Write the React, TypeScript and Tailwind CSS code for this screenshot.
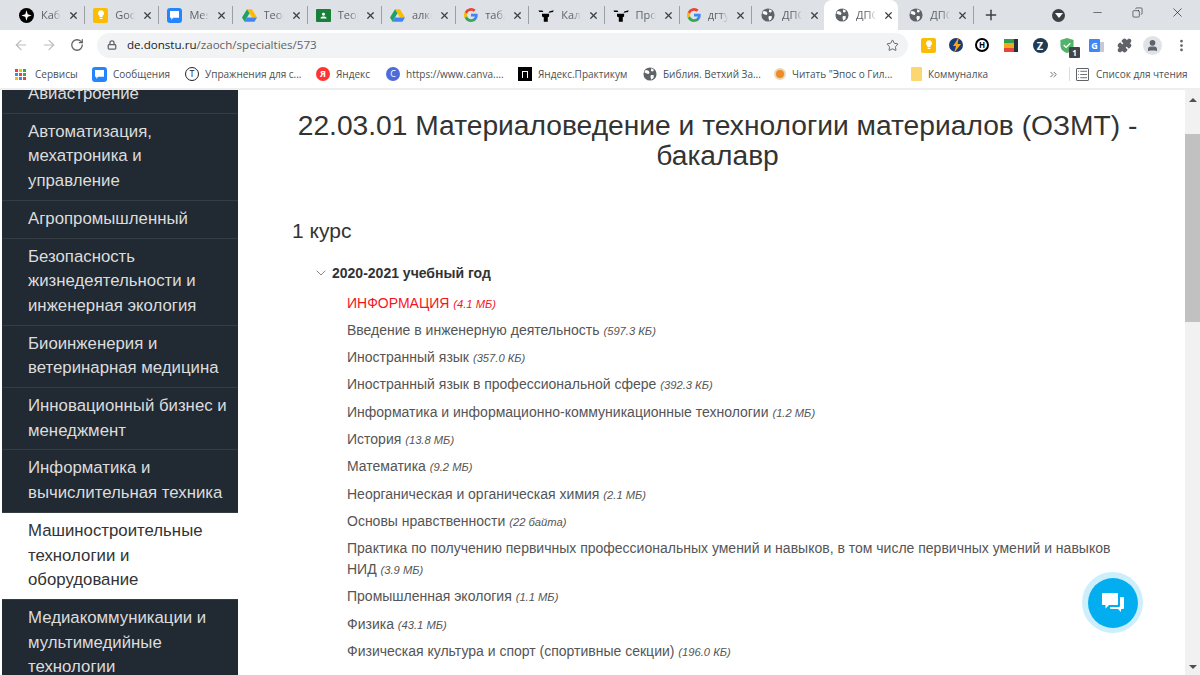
import React from "react";
import { ArrowLeft, ArrowRight, RotateCw, Lock, Star, X, Plus, Minus, Copy, MoreVertical, Puzzle, ChevronDown, ChevronsRight, List, User } from "lucide-react";

const Globe = () => (
  <svg viewBox="0 0 16 16" className="w-[14px] h-[14px] shrink-0">
    <circle cx="8" cy="8" r="7.5" fill="#5f6368" />
    <path d="M3 3.500l3 .5 1.500 2-1 2-2.500-.5L1.500 6zM9 9l3.500.5-.5 3-2.500 2-1-3zM9.500 1.500l3 1.500-1 2-2.500-.5z" fill="#fff" />
  </svg>
);

const GoogleG = () => (
  <svg viewBox="0 0 18 18" className="w-[14px] h-[14px] shrink-0">
    <path d="M17.600 9.200c0-.6-.1-1.200-.2-1.800H9v3.400h4.800a4.100 4.100 0 0 1-1.800 2.700v2.200h2.900c1.700-1.600 2.700-3.900 2.700-6.500z" fill="#4285f4" />
    <path d="M9 18c2.400 0 4.500-.8 5.900-2.200L12 13.500c-.8.500-1.800.9-3 .9-2.300 0-4.300-1.600-5-3.700H1v2.300A9 9 0 0 0 9 18z" fill="#34a853" />
    <path d="M4 10.700a5.400 5.400 0 0 1 0-3.400V5H1a9 9 0 0 0 0 8z" fill="#fbbc05" />
    <path d="M9 3.600c1.300 0 2.500.5 3.400 1.300L15 2.400A9 9 0 0 0 1 5l3 2.300c.7-2.100 2.700-3.700 5-3.700z" fill="#ea4335" />
  </svg>
);

const Drive = () => (
  <svg viewBox="0 0 18 16" className="w-[15px] h-[14px] shrink-0">
    <path d="M6 1h6l6 10h-6z" fill="#fbbc05" />
    <path d="M6 1L0 11l3 5 6-10z" fill="#1ea362" />
    <path d="M3 16h12l3-5H6z" fill="#4285f4" />
  </svg>
);

const Keep = () => (
  <div className="w-[15px] h-[15px] shrink-0 rounded-[2px] bg-[#fbbc04] flex items-center justify-center">
    <svg viewBox="0 0 10 12" className="w-[8px] h-[10px]">
      <path d="M5 0a3.800 3.800 0 0 0-2 7v1.500h4V7a3.800 3.800 0 0 0-2-7zM3.300 9.500h3.400V11H3.300z" fill="#fff" />
    </svg>
  </div>
);

const Messages = () => (
  <div className="w-[15px] h-[15px] shrink-0 rounded-[3px] bg-[#2684fc] flex items-center justify-center">
    <svg viewBox="0 0 10 10" className="w-[9px] h-[9px]">
      <path d="M0 0h10v7.500H3.500L1.500 10V7.500H0z" fill="#fff" />
    </svg>
  </div>
);

const Cabinet = () => (
  <svg viewBox="0 0 16 16" className="w-[15px] h-[15px] shrink-0">
    <circle cx="8" cy="8" r="8" fill="#000" />
    <path d="M8 2.500l1.300 4.200L13.500 8l-4.200 1.300L8 13.500 6.700 9.300 2.500 8l4.200-1.300z" fill="#fff" />
  </svg>
);

const Classroom = () => (
  <div className="w-[15px] h-[13px] shrink-0 rounded-[1px] bg-[#188038] flex items-center justify-center">
    <svg viewBox="0 0 10 8" className="w-[9px] h-[7px]">
      <circle cx="5" cy="2.500" r="1.700" fill="#fff" />
      <path d="M1.500 7.500c0-1.600 1.600-2.300 3.500-2.300s3.500.7 3.500 2.300z" fill="#fff" />
    </svg>
  </div>
);

const Practicum = () => (
  <svg viewBox="0 0 18 14" className="w-[16px] h-[13px] shrink-0">
    <path d="M4.500 5h8v3l-1.500 1v5H6.500V9l-2-1z" fill="#000" />
    <path d="M.5 1.500h4.500l1 1.500H1.500zM17.500 1l-5 1.500-.5 1.500 5-1z" fill="#000" />
  </svg>
);

type TabData = { icon: React.ReactNode; title: string; active?: boolean; noSep?: boolean };

const tabs: TabData[] = [
  { icon: <Cabinet />, title: "Кабинет" },
  { icon: <Keep />, title: "Google" },
  { icon: <Messages />, title: "Messages" },
  { icon: <Drive />, title: "Теория" },
  { icon: <Classroom />, title: "Теория" },
  { icon: <Drive />, title: "алкоголь" },
  { icon: <GoogleG />, title: "таблица" },
  { icon: <Practicum />, title: "Калькулятор" },
  { icon: <Practicum />, title: "Программа" },
  { icon: <GoogleG />, title: "дгту" },
  { icon: <Globe />, title: "ДПО", noSep: true },
  { icon: <Globe />, title: "ДПО", active: true, noSep: true },
  { icon: <Globe />, title: "ДПО" },
];

const sideItems = [
  { text: ["Авиастроение"] },
  { text: ["Автоматизация,", "мехатроника и", "управление"] },
  { text: ["Агропромышленный"] },
  { text: ["Безопасность", "жизнедеятельности и", "инженерная экология"] },
  { text: ["Биоинженерия и", "ветеринарная медицина"] },
  { text: ["Инновационный бизнес и", "менеджмент"] },
  { text: ["Информатика и", "вычислительная техника"] },
  { text: ["Машиностроительные", "технологии и", "оборудование"], active: true },
  { text: ["Медиакоммуникации и", "мультимедийные", "технологии"] },
];

const files = [
  { name: "Введение в инженерную деятельность", size: "597.3 КБ" },
  { name: "Иностранный язык", size: "357.0 КБ" },
  { name: "Иностранный язык в профессиональной сфере", size: "392.3 КБ" },
  { name: "Информатика и информационно-коммуникационные технологии", size: "1.2 МБ" },
  { name: "История", size: "13.8 МБ" },
  { name: "Математика", size: "9.2 МБ" },
  { name: "Неорганическая и органическая химия", size: "2.1 МБ" },
  { name: "Основы нравственности", size: "22 байта" },
  { name: "Практика по получению первичных профессиональных умений и навыков, в том числе первичных умений и навыков НИД", size: "3.9 МБ" },
  { name: "Промышленная экология", size: "1.1 МБ" },
  { name: "Физика", size: "43.1 МБ" },
  { name: "Физическая культура и спорт (спортивные секции)", size: "196.0 КБ" },
];

const Bookmark = ({ icon, label, className }: { icon: React.ReactNode; label: string; className: string }) => (
  <div className={`flex items-center gap-[6px] shrink-0 ${className}`}>
    {icon}
    <span className="whitespace-nowrap">{label}</span>
  </div>
);

export default function App() {
  return (
    <div className="w-[1200px] h-[675px] overflow-hidden bg-white flex flex-col font-['Liberation_Sans',Arial,sans-serif]">
      {/* вкладки */}
      <div className="h-[30px] bg-[#dee1e6] flex shrink-0 pl-[8px] font-['Open_Sans',sans-serif] text-[11px] text-[#5f6368]">
        {tabs.map((tab, i) => (
          <div
            key={i}
            className={`w-[74.200px] shrink-0 h-full flex items-center pl-[11px] pr-[6px] gap-[7px] ${
              tab.active ? "bg-white rounded-t-[8px]" : ""
            }`}
          >
            {tab.icon}
            <span className="w-[20px] shrink-0 overflow-hidden whitespace-nowrap [mask-image:linear-gradient(to_right,black_60%,transparent)]">
              {tab.title}
            </span>
            <X size={11} strokeWidth={2.6} className="text-[#3c4043] shrink-0 ml-auto mr-[5px]" />
            <div className={`w-px h-[18px] shrink-0 -ml-[7px] -mr-[8px] ${tab.noSep ? "bg-transparent" : "bg-[#9aa0a6]"}`} />
          </div>
        ))}
        {/* + и кнопки окна */}
        <Plus size={16} strokeWidth={2.2} className="text-[#3c4043] self-center ml-[11px]" />
        <div className="self-center ml-[53px] w-[13px] h-[13px] rounded-full bg-[#3c4043] flex items-center justify-center">
          <div className="w-0 h-0 border-x-[4px] border-x-transparent border-t-[5px] border-t-white mt-[1px]" />
        </div>
        <Minus size={13} className="text-[#111] self-center ml-[26px] -mt-[5px]" strokeWidth={1} />
        <Copy size={11} className="text-[#111] self-center ml-[28px] -mt-[5px] -scale-x-100" strokeWidth={1.2} />
        <X size={15} className="text-[#111] self-center ml-[27px] -mt-[5px]" strokeWidth={1} />
      </div>

      {/* адресная строка */}
      <div className="h-[30px] bg-white flex items-center shrink-0 font-['Open_Sans',sans-serif]">
        <ArrowLeft size={16} strokeWidth={1.8} className="text-[#b9bcc1] ml-[13px]" />
        <ArrowRight size={16} strokeWidth={1.8} className="text-[#b9bcc1] ml-[12px]" />
        <RotateCw size={14} strokeWidth={2.2} className="text-[#5f6368] ml-[13px]" />
        <div className="ml-[13px] w-[811px] h-[25px] bg-[#f1f3f4] rounded-full flex items-center pl-[10px] pr-[6px] text-[11.600px]">
          <Lock size={10} strokeWidth={3} className="text-[#5f6368] mr-[10px]" />
          <span className="text-[#202124]">de.donstu.ru</span>
          <span className="text-[#5f6368]">/zaoch/specialties/573</span>
          <Star size={13} strokeWidth={1.8} className="text-[#5f6368] ml-auto mr-[3.500px]" />
        </div>
        <div className="ml-[13px]">
          <Keep />
        </div>
        <svg viewBox="0 0 14 16" className="w-[14px] h-[16px] ml-[13px]">
          <circle cx="7" cy="8" r="7" fill="#1a3c78" />
          <path d="M10 0L4 9h3l-2 7 7-9H8.500z" fill="#f5a623" />
        </svg>
        <div className="ml-[12px] w-[14px] h-[14px] rounded-full border-2 border-black flex items-center justify-center text-[8px] font-bold text-black leading-none">
          H
        </div>
        <div className="ml-[15px] w-[14px] h-[13px] flex">
          <div className="w-[10px] flex flex-col">
            <div className="h-[4px] bg-[#2e9e4f]" />
            <div className="h-[5px] bg-[#f2a81d]" />
            <div className="h-[4px] bg-[#e5483b]" />
          </div>
          <div className="w-[4px] bg-[#23303a]" />
        </div>
        <div className="ml-[14.500px] w-[15px] h-[15px] rounded-full bg-[#1f3a54] flex items-center justify-center text-[11px] font-bold text-white leading-none">
          Z
        </div>
        <div className="ml-[12.500px] relative w-[14px] h-[15px]">
          <svg viewBox="0 0 14 16" className="w-[14px] h-[15px]">
            <path d="M7 0l7 2v6c0 4-3 6.500-7 8-4-1.500-7-4-7-8V2z" fill="#52b36a" />
            <path d="M3.500 7.500l2.500 2.500 4.500-4.500" fill="none" stroke="#fff" strokeWidth="1.500" />
          </svg>
          <div className="absolute left-[9px] top-[9px] w-[11px] h-[11px] bg-[#444] rounded-[1px] text-white text-[8px] leading-[11px] text-center font-bold">
            1
          </div>
        </div>
        <div className="ml-[15px] w-[11px] h-[13px] bg-[#4285f4] rounded-[1px] text-white text-[9px] leading-[13px] text-center font-bold">
          G
        </div>
        <div className="w-[4px] h-[10px] bg-[#c5cbd3] mt-[3px]" />
        <Puzzle size={15} strokeWidth={2} className="text-[#5f6368] fill-[#5f6368] ml-[12.500px]" />
        <div className="ml-[11px] w-[19px] h-[19px] rounded-full bg-[#dfe3e8] flex items-center justify-center">
          <User size={13} strokeWidth={2.5} className="text-[#5f6368] fill-[#5f6368]" />
        </div>
        <MoreVertical size={15} strokeWidth={2.4} className="text-[#5f6368] ml-[12px]" />
      </div>

      {/* закладки */}
      <div className="h-[30px] bg-white flex items-center shrink-0 border-b-2 border-[#eeeeee] font-['Open_Sans',sans-serif] text-[10px] text-[#4b4f54] pl-[15px]">
        <Bookmark
          className="w-[77px]"
          label="Сервисы"
          icon={
            <div className="grid grid-cols-3 gap-[1px] w-[11px] h-[11px] mr-[3px]">
              {["#ea4335", "#fbbc05", "#34a853", "#4285f4", "#ea4335", "#34a853", "#fbbc05", "#4285f4", "#ea4335"].map((c, i) => (
                <div key={i} style={{ backgroundColor: c }} />
              ))}
            </div>
          }
        />
        <Bookmark className="w-[93px]" label="Сообщения" icon={<Messages />} />
        <Bookmark
          className="w-[131px]"
          label="Упражнения для с..."
          icon={
            <div className="w-[14px] h-[14px] rounded-full border border-[#222] text-[9px] leading-[12px] text-center text-[#222]">
              Т
            </div>
          }
        />
        <Bookmark
          className="w-[70px]"
          label="Яндекс"
          icon={<div className="w-[14px] h-[14px] rounded-full bg-[#f33] text-white text-[9px] leading-[14px] text-center font-bold">Я</div>}
        />
        <Bookmark
          className="w-[132px]"
          label="https://www.canva...."
          icon={<div className="w-[14px] h-[14px] rounded-full bg-[#4f6bd8] text-white text-[9px] leading-[13px] text-center">C</div>}
        />
        <Bookmark
          className="w-[125px]"
          label="Яндекс.Практикум"
          icon={
            <div className="w-[14px] h-[14px] bg-black flex items-center justify-center">
              <div className="w-[6px] h-[7px] border border-b-0 border-white" />
            </div>
          }
        />
        <Bookmark className="w-[131px]" label="Библия. Ветхий За..." icon={<Globe />} />
        <Bookmark
          className="w-[137px]"
          label="Читать &quot;Эпос о Гил..."
          icon={<div className="w-[12px] h-[12px] rounded-full bg-[#f08a24] border-2 border-[#e9d6b8]" />}
        />
        <Bookmark className="w-[137px]" label="Коммуналка" icon={<div className="w-[11px] h-[14px] bg-[#fcd671] rounded-[1px]" />} />
        <ChevronsRight size={11} className="text-[#5f6368]" />
        <div className="w-px h-[14px] bg-[#dadce0] ml-[10px]" />
        <List size={13} className="text-[#5f6368] ml-[6px] border border-[#5f6368] rounded-[1px]" />
        <span className="ml-[7px] whitespace-nowrap">Список для чтения</span>
      </div>

      {/* страница */}
      <div className="flex-1 flex min-h-0 relative">
        <div className="w-[236px] ml-[2px] shrink-0 overflow-hidden bg-[#212a33]">
          <div className="-mt-[14px] text-[16.800px] leading-[24.700px]">
            {sideItems.map((item) => (
              <div
                key={item.text[0]}
                className={`pl-[26px] py-[6px] border-b border-[#353d44] whitespace-nowrap ${
                  item.active ? "bg-white text-[#333]" : "text-[#dcdcdc]"
                }`}
              >
                {item.text.map((line) => (
                  <div key={line}>{line}</div>
                ))}
              </div>
            ))}
          </div>
        </div>

        <div className="flex-1 min-w-0 pl-[54px] pr-[42px] text-[#555]">
          <h1 className="mt-[21px] text-center text-[28.200px] leading-[29.500px] text-[#333] font-normal">
            22.03.01 Материаловедение и технологии материалов (ОЗМТ) - бакалавр
          </h1>
          <h2 className="mt-[48px] text-[21px] leading-[26px] text-[#333]">1 курс</h2>
          <div className="mt-[19px] ml-[21px] flex items-center gap-[3px] text-[14px] leading-[20px] font-bold text-[#333]">
            <ChevronDown size={16} strokeWidth={1} className="text-[#444]" />
            2020-2021 учебный год
          </div>
          <ul className="mt-[9.500px] ml-[55px] text-[14px] leading-[21px]">
            <li className="text-[#f5141e] mb-[6.300px]">
              ИНФОРМАЦИЯ <i className="text-[11.200px] leading-none">(4.1 МБ)</i>
            </li>
            {files.map((f) => (
              <li key={f.name} className="mb-[6.300px]">
                {f.name} <i className="text-[11.200px] leading-none">({f.size})</i>
              </li>
            ))}
          </ul>
        </div>

        {/* скроллбар */}
        <div className="w-[15px] bg-[#f1f1f1] shrink-0 flex flex-col items-center">
          <div className="h-[19px] flex items-center">
            <div className="w-0 h-0 border-x-[4px] border-x-transparent border-b-[4px] border-b-[#505050]" />
          </div>
          <div className="mt-[25px] h-[188px] w-full bg-[#c1c1c1]" />
          <div className="mt-auto h-[16px] flex items-center">
            <div className="w-0 h-0 border-x-[4px] border-x-transparent border-t-[4px] border-t-[#505050]" />
          </div>
        </div>

        {/* чат */}
        <div className="absolute left-[1082px] top-[482px] w-[61px] h-[61px] rounded-full bg-[#cdeffc] flex items-center justify-center">
          <div className="w-[50px] h-[50px] rounded-full bg-[#03aef0] flex items-center justify-center">
            <svg viewBox="0 0 22 20" className="w-[22px] h-[20px]">
              <path d="M1 0h14a1 1 0 0 1 1 1v10a1 1 0 0 1-1 1H7l-3.500 3.500V12H1a1 1 0 0 1-1-1V1a1 1 0 0 1 1-1z" fill="#fff" />
              <path d="M18 4h3a1 1 0 0 1 1 1v10a1 1 0 0 1-1 1h-2v3l-3-3H9a1 1 0 0 1-1-1v-1h9a1 1 0 0 0 1-1z" fill="#fff" />
            </svg>
          </div>
        </div>
      </div>
    </div>
  );
}
